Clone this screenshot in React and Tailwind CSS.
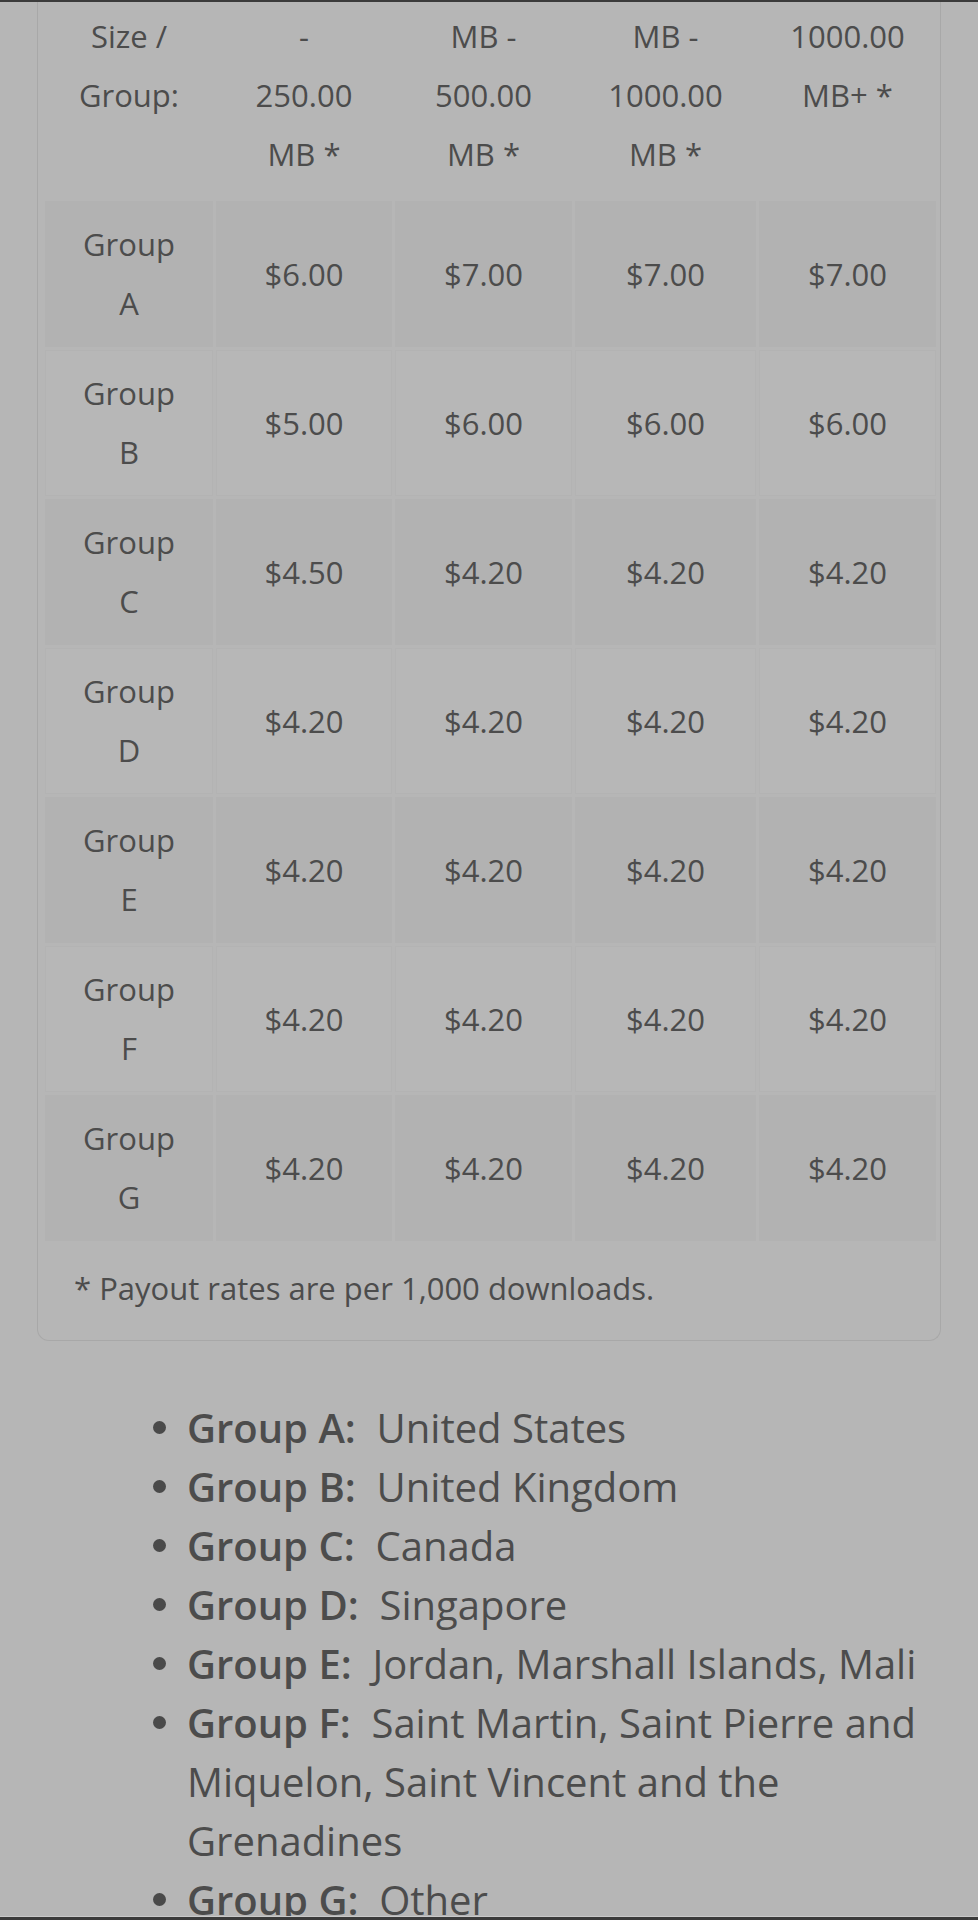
import React from "react";

const cols = ["w-[168px]", "w-[176px]", "w-[177px]", "w-[181px]", "w-[177px]"];

const headerLines = [
  ["Size /", "Group:"],
  ["-", "250.00", "MB *"],
  ["MB -", "500.00", "MB *"],
  ["MB -", "1000.00", "MB *"],
  ["1000.00", "MB+ *"],
];

const rows = [
  { group: "A", rates: ["$6.00", "$7.00", "$7.00", "$7.00"] },
  { group: "B", rates: ["$5.00", "$6.00", "$6.00", "$6.00"] },
  { group: "C", rates: ["$4.50", "$4.20", "$4.20", "$4.20"] },
  { group: "D", rates: ["$4.20", "$4.20", "$4.20", "$4.20"] },
  { group: "E", rates: ["$4.20", "$4.20", "$4.20", "$4.20"] },
  { group: "F", rates: ["$4.20", "$4.20", "$4.20", "$4.20"] },
  { group: "G", rates: ["$4.20", "$4.20", "$4.20", "$4.20"] },
];

const countries = [
  ["Group A:", "United States"],
  ["Group B:", "United Kingdom"],
  ["Group C:", "Canada"],
  ["Group D:", "Singapore"],
  ["Group E:", "Jordan, Marshall Islands, Mali"],
  ["Group F:", "Saint Martin, Saint Pierre and Miquelon, Saint Vincent and the Grenadines"],
  ["Group G:", "Other"],
];

export default function App() {
  return (
    <div
      className="relative h-[1920px] overflow-hidden bg-[#b6b6b6] text-[#4c4c4c]"
      style={{ fontFamily: '"Open Sans", "Noto Sans", sans-serif' }}
    >
      {/* top edge */}
      <div className="h-[2px] bg-[#3b3b3b]" />

      {/* rates card */}
      <div className="ml-[37px] w-[904px] border-x border-b border-[#a8a8a8] rounded-b-[12px] pl-[7px] pr-[4px] text-[31px] leading-[59px]">
        {/* header */}
        <div className="flex gap-[3px] pt-[5px] pb-[17px]">
          {headerLines.map((lines, i) => (
            <div key={i} className={`${cols[i]} flex flex-col items-center`}>
              {lines.map((l, j) => (
                <span key={j}>{l}</span>
              ))}
            </div>
          ))}
        </div>

        {/* body */}
        <div className="flex flex-col gap-[3px]">
          {rows.map((r, idx) => {
            const striped = idx % 2 === 0;
            const cell = striped ? "bg-[#b2b2b2]" : "bg-[#b7b7b7] border border-[#b3b3b3]";
            return (
              <div key={r.group} className="flex gap-[3px]">
                <div className={`${cols[0]} h-[146px] flex flex-col items-center justify-center ${cell}`}>
                  <span>Group</span>
                  <span>{r.group}</span>
                </div>
                {r.rates.map((v, i) => (
                  <div key={i} className={`${cols[i + 1]} h-[146px] flex items-center justify-center ${cell}`}>
                    {v}
                  </div>
                ))}
              </div>
            );
          })}
        </div>

        <p className="pl-[29px] pt-[18px] pb-[22px]">* Payout rates are per 1,000 downloads.</p>
      </div>

      {/* groups list */}
      <ul className="mt-[57px] ml-[153px] w-[780px] text-[40px] leading-[59px]">
        {countries.map(([g, c]) => (
          <li key={g} className="flex">
            <div className="w-[34px] h-[59px] shrink-0 flex items-center">
              <span className="block w-[13px] h-[13px] rounded-full bg-[#4a4a4a]" />
            </div>
            <div className="flex-1">
              <span className="font-semibold">{g}</span>
              {"\u00a0 "}
              {c}
            </div>
          </li>
        ))}
      </ul>

      {/* bottom edge */}
      <div className="absolute bottom-0 left-0 right-0">
        <div className="h-[1px] bg-[#c9c9c9]" />
        <div className="h-[3px] bg-[#3b3b3b]" />
      </div>
    </div>
  );
}
